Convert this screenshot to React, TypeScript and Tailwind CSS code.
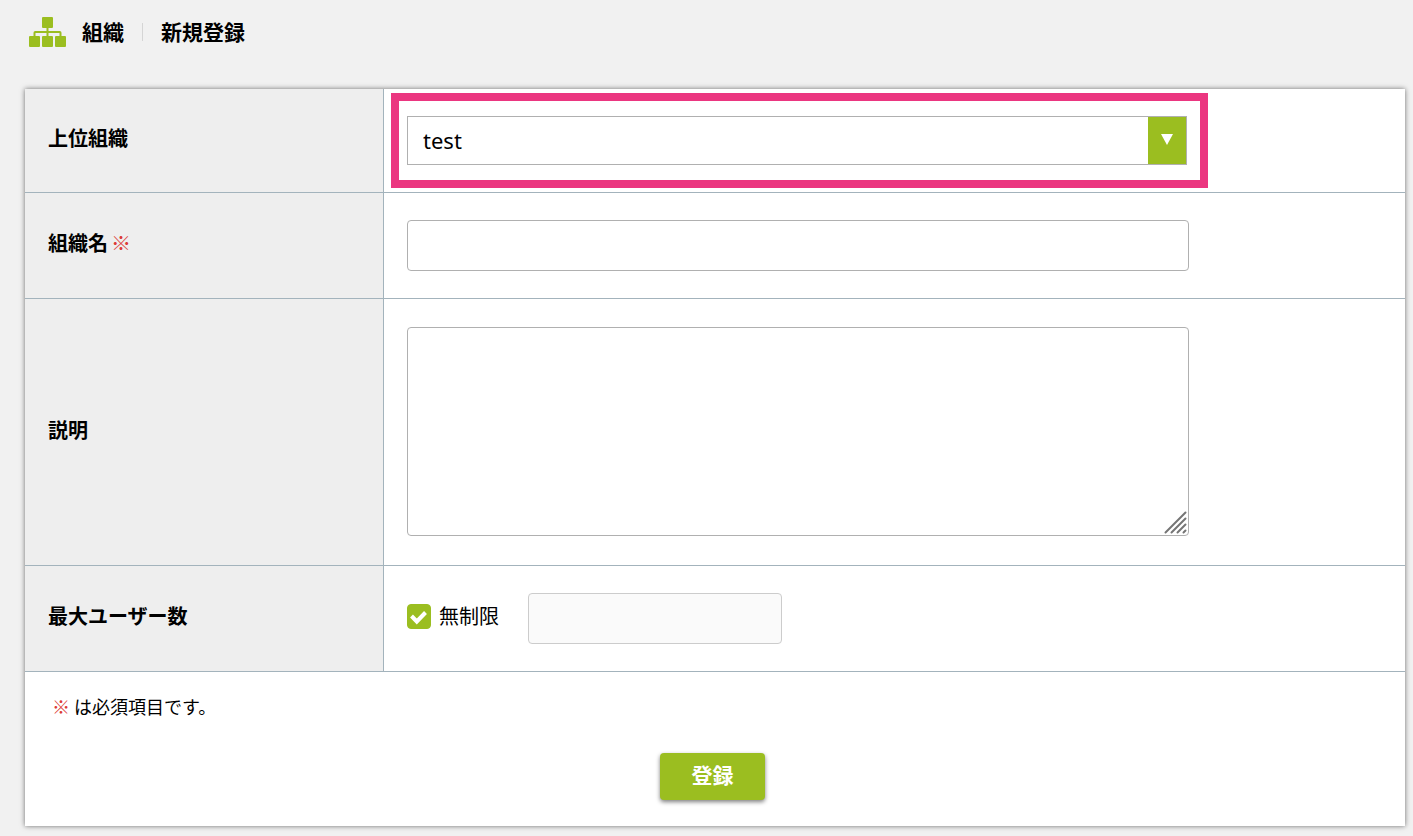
import type { ReactNode } from 'react';

type RowProps = {
  label: string;
  htmlFor: string;
  required?: boolean;
  cellClass?: string;
  children: ReactNode;
};

function OrgIcon() {
  return (
    <svg width="37" height="30" viewBox="0 0 37 30" fill="#9bbe20" aria-hidden="true">
      <rect x="13" y="0" width="11" height="11" rx="1" />
      <rect x="0" y="19" width="11" height="11" rx="1" />
      <rect x="13" y="19" width="11" height="11" rx="1" />
      <rect x="26" y="19" width="11" height="11" rx="1" />
      <path d="M5.5 20v-4.2q0-.8.8-.8h24.4q.8 0 .8.8V20M18.5 10v10" fill="none" stroke="#9bbe20" strokeWidth="2" />
    </svg>
  );
}

function FormRow({ label, htmlFor, required, cellClass = 'px-[23px] py-[27px]', children }: RowProps) {
  return (
    <div className="flex border-b border-[#a3b3bc]">
      <div className="flex w-[359px] shrink-0 items-center border-r border-[#a3b3bc] bg-[#eeeeee] pl-[23px] pb-[5px]">
        <label htmlFor={htmlFor} className="font-bold">{label}</label>
        {required && <span className="ml-[3px] text-[#dc3b36]">※</span>}
      </div>
      <div className={`min-w-0 flex-1 ${cellClass}`}>{children}</div>
    </div>
  );
}

export default function App() {
  return (
    <div className="min-h-screen bg-[#f1f1f1] pt-4 pr-2 pb-[10px] pl-[25px] font-['Noto_Sans_CJK_JP',sans-serif] text-[20px] leading-8 text-black">
      <header className="flex h-8 items-center pl-1 text-[21px] font-bold">
        <OrgIcon />
        <h1 className="ml-4 pb-[3px]">組織</h1>
        <span className="mx-[18px] h-[18px] w-px bg-[#d5d5d5]" />
        <h2 className="pb-[3px]">新規登録</h2>
      </header>

      <form className="mt-[41px] bg-white shadow-[0_0_5px_rgba(0,0,0,0.55)]">
        <FormRow label="上位組織" htmlFor="parent" cellClass="px-[7px] py-1">
          <div className="w-full max-w-[817px] border-8 border-[#eb3680] py-[15px] pr-[13px] pl-2">
            <div className="relative">
              <select
                id="parent"
                className="block h-[49px] w-full appearance-none border border-[#b0b0b0] bg-white pr-12 pb-[2px] pl-[15px] font-['Noto_Sans',sans-serif] text-[22px]"
              >
                <option>test</option>
              </select>
              <span className="pointer-events-none absolute inset-y-px right-px flex w-[38px] items-center justify-center bg-[#9bbe20] pb-[2px]">
                <svg width="12" height="11" viewBox="0 0 12 11" fill="#fff" aria-hidden="true">
                  <path d="M0 0h12L6 11z" />
                </svg>
              </span>
            </div>
          </div>
        </FormRow>

        <FormRow label="組織名" htmlFor="name" required>
          <input id="name" type="text" className="block h-[51px] w-full max-w-[782px] rounded border border-[#b0b0b0] bg-white px-4" />
        </FormRow>

        <FormRow label="説明" htmlFor="description" cellClass="px-[23px] pt-7 pb-[29px]">
          <div className="relative w-full max-w-[782px]">
            <textarea id="description" className="block h-[209px] w-full resize-none rounded border border-[#b0b0b0] bg-white px-4 py-2" />
            <svg
              className="pointer-events-none absolute right-[2px] bottom-[2px]"
              width="23"
              height="23"
              viewBox="0 0 23 23"
              stroke="#757575"
              strokeWidth="2"
              strokeLinecap="round"
              aria-hidden="true"
            >
              <path d="M1.5 21.5l20-20M7.5 21.5l14-14M13.5 21.5l8-8M19.5 21.5l2-2" />
            </svg>
          </div>
        </FormRow>

        <FormRow label="最大ユーザー数" htmlFor="max-users">
          <div className="flex items-center">
            <label className="flex items-center gap-2">
              <span className="relative mb-1 block h-[25px] w-6">
                <input type="checkbox" defaultChecked className="block h-[25px] w-6 appearance-none rounded border border-[#9bbe20] checked:bg-[#9bbe20]" />
                <svg className="pointer-events-none absolute inset-0" width="24" height="25" viewBox="0 0 24 25" fill="none" stroke="#fff" strokeWidth="4" aria-hidden="true">
                  <path d="M4.5 12l5.3 5.5L18.5 8.5" />
                </svg>
              </span>
              <span className="pb-[5px]">無制限</span>
            </label>
            <input id="max-users" type="text" disabled className="ml-[29px] block h-[51px] w-[254px] rounded border border-[#cccccc] bg-[#fafafa] px-4" />
          </div>
        </FormRow>

        <div className="pt-[18px] pr-8 pb-[26px] pl-[27px]">
          <p className="text-[18px]">
            <span className="text-[#dc3b36]">※</span> は必須項目です。
          </p>
          <div className="mt-[31px] flex justify-center">
            <button type="button" className="h-[47px] w-[105px] rounded bg-[#9bbe20] pb-[5px] text-[21px] font-bold text-white shadow-[0_2px_4px_rgba(0,0,0,0.5)]">
              登録
            </button>
          </div>
        </div>
      </form>
    </div>
  );
}
